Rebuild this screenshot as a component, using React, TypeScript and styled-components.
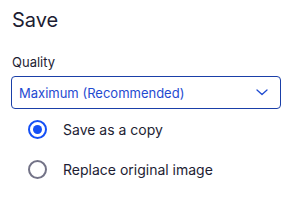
import { useState } from "react";
import styled, { createGlobalStyle } from "styled-components";

const GlobalStyle = createGlobalStyle`
  body {
    margin: 0;
    background: #ffffff;
    font-family: Inter, "Noto Sans", sans-serif;
  }
`;

const options = [
  { id: "copy", label: "Save as a copy" },
  { id: "replace", label: "Replace original image" },
];

const App = () => {
  const [choice, setChoice] = useState("copy");

  return (
    <>
      <GlobalStyle />
      <Panel>
        <Title>Save</Title>
        <Label>Quality</Label>
        <Select>
          <SelectValue>Maximum (Recommended)</SelectValue>
          <Chevron viewBox="0 0 12 7" aria-hidden>
            <path d="M1 1l5 4.5L11 1" />
          </Chevron>
        </Select>
        <RadioList>
          {options.map((opt) => (
            <RadioRow key={opt.id} onClick={() => setChoice(opt.id)}>
              <Radio $checked={choice === opt.id} />
              <RadioLabel>{opt.label}</RadioLabel>
            </RadioRow>
          ))}
        </RadioList>
      </Panel>
    </>
  );
};

const Panel = styled.div`
  width: 292px;
  height: 222px;
  box-sizing: border-box;
  padding: 8px 12px 0 11px;
  display: flex;
  flex-direction: column;
`;

const Title = styled.div`
  font-size: 20px;
  line-height: 24px;
  color: #1d1d33;
  padding-left: 1px;
`;

const Label = styled.div`
  margin-top: 22px;
  font-size: 13px;
  line-height: 16px;
  color: #1d1d33;
  padding-left: 1px;
`;

const Select = styled.div`
  margin-top: 6px;
  width: 270px;
  height: 33px;
  box-sizing: border-box;
  border: 1px solid #1a3fa8;
  border-radius: 4px;
  display: flex;
  align-items: center;
  justify-content: space-between;
  padding: 0 12px 0 7px;
`;

const SelectValue = styled.span`
  font-size: 13px;
  color: #1f4bd1;
`;

const Chevron = styled.svg`
  width: 12px;
  height: 7px;
  fill: none;
  stroke: #1f4bd1;
  stroke-width: 1.3;
  stroke-linecap: round;
  stroke-linejoin: round;
`;

const RadioList = styled.div`
  display: flex;
  flex-direction: column;
  padding-left: 17px;
`;

const RadioRow = styled.div`
  height: 40px;
  display: flex;
  align-items: center;
  gap: 16px;
  cursor: pointer;
`;

const Radio = styled.span<{ $checked: boolean }>`
  width: 19px;
  height: 19px;
  box-sizing: border-box;
  border-radius: 50%;
  border: 2px solid ${({ $checked }) => ($checked ? "#1550f5" : "#737387")};
  display: flex;
  align-items: center;
  justify-content: center;
  &::after {
    content: "";
    width: 9px;
    height: 9px;
    border-radius: 50%;
    background: #1550f5;
    display: ${({ $checked }) => ($checked ? "block" : "none")};
  }
`;

const RadioLabel = styled.span`
  font-size: 14px;
  color: #1d1d33;
`;

export default App;
